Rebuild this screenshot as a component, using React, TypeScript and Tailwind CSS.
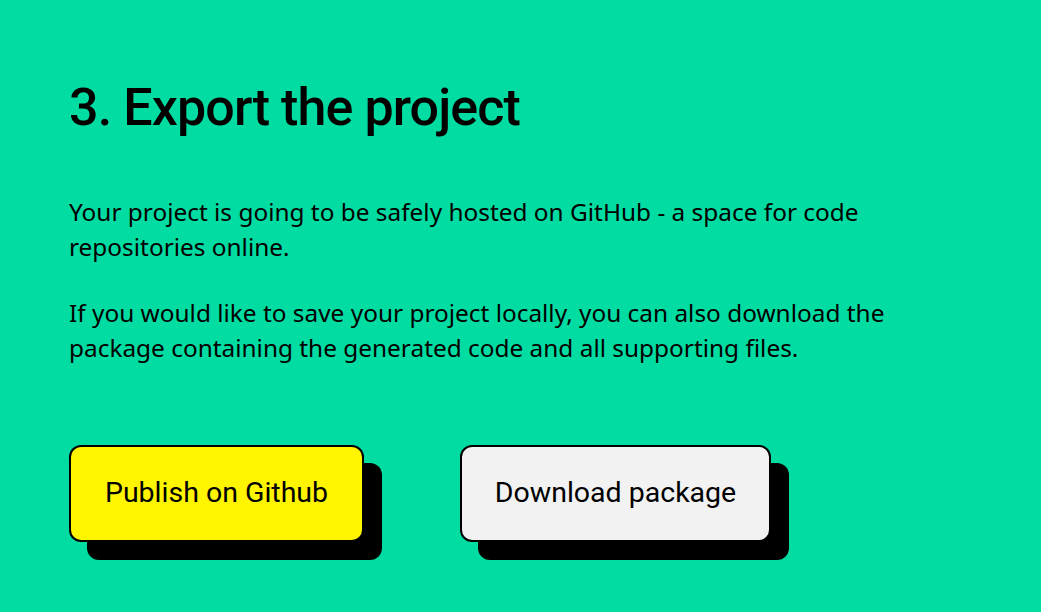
export default function App() {
  return (
    <div className="min-h-screen w-full bg-[#00dca2] text-black">
      <div className="pl-[69px] pt-[74px]">
        {/* Heading */}
        <h1 className="font-['Roboto',sans-serif] text-[52px] font-medium leading-[68px] tracking-[-0.9px]">
          3. Export the project
        </h1>

        {/* Copy */}
        <div className="mt-[52px] w-[860px] font-['Noto_Sans',sans-serif] text-[24.4px] leading-[35px]">
          <p>
            Your project is going to be safely hosted on GitHub - a space for code
            repositories online.
          </p>
          <p className="mt-[31px]">
            If you would like to save your project locally, you can also download the
            package containing the generated code and all supporting files.
          </p>
        </div>

        {/* Actions */}
        <div className="mt-[80px] flex gap-[96px]">
          <button className="h-[97px] w-[295px] rounded-[12px] border-2 border-black bg-[#fff500] font-['Roboto',sans-serif] text-[28.5px] font-normal shadow-[18px_18px_0_0_#000]">
            Publish on Github
          </button>
          <button className="h-[97px] w-[311px] rounded-[12px] border-2 border-black bg-[#f2f2f2] font-['Roboto',sans-serif] text-[28.5px] font-normal shadow-[18px_18px_0_0_#000]">
            Download package
          </button>
        </div>
      </div>
    </div>
  );
}
